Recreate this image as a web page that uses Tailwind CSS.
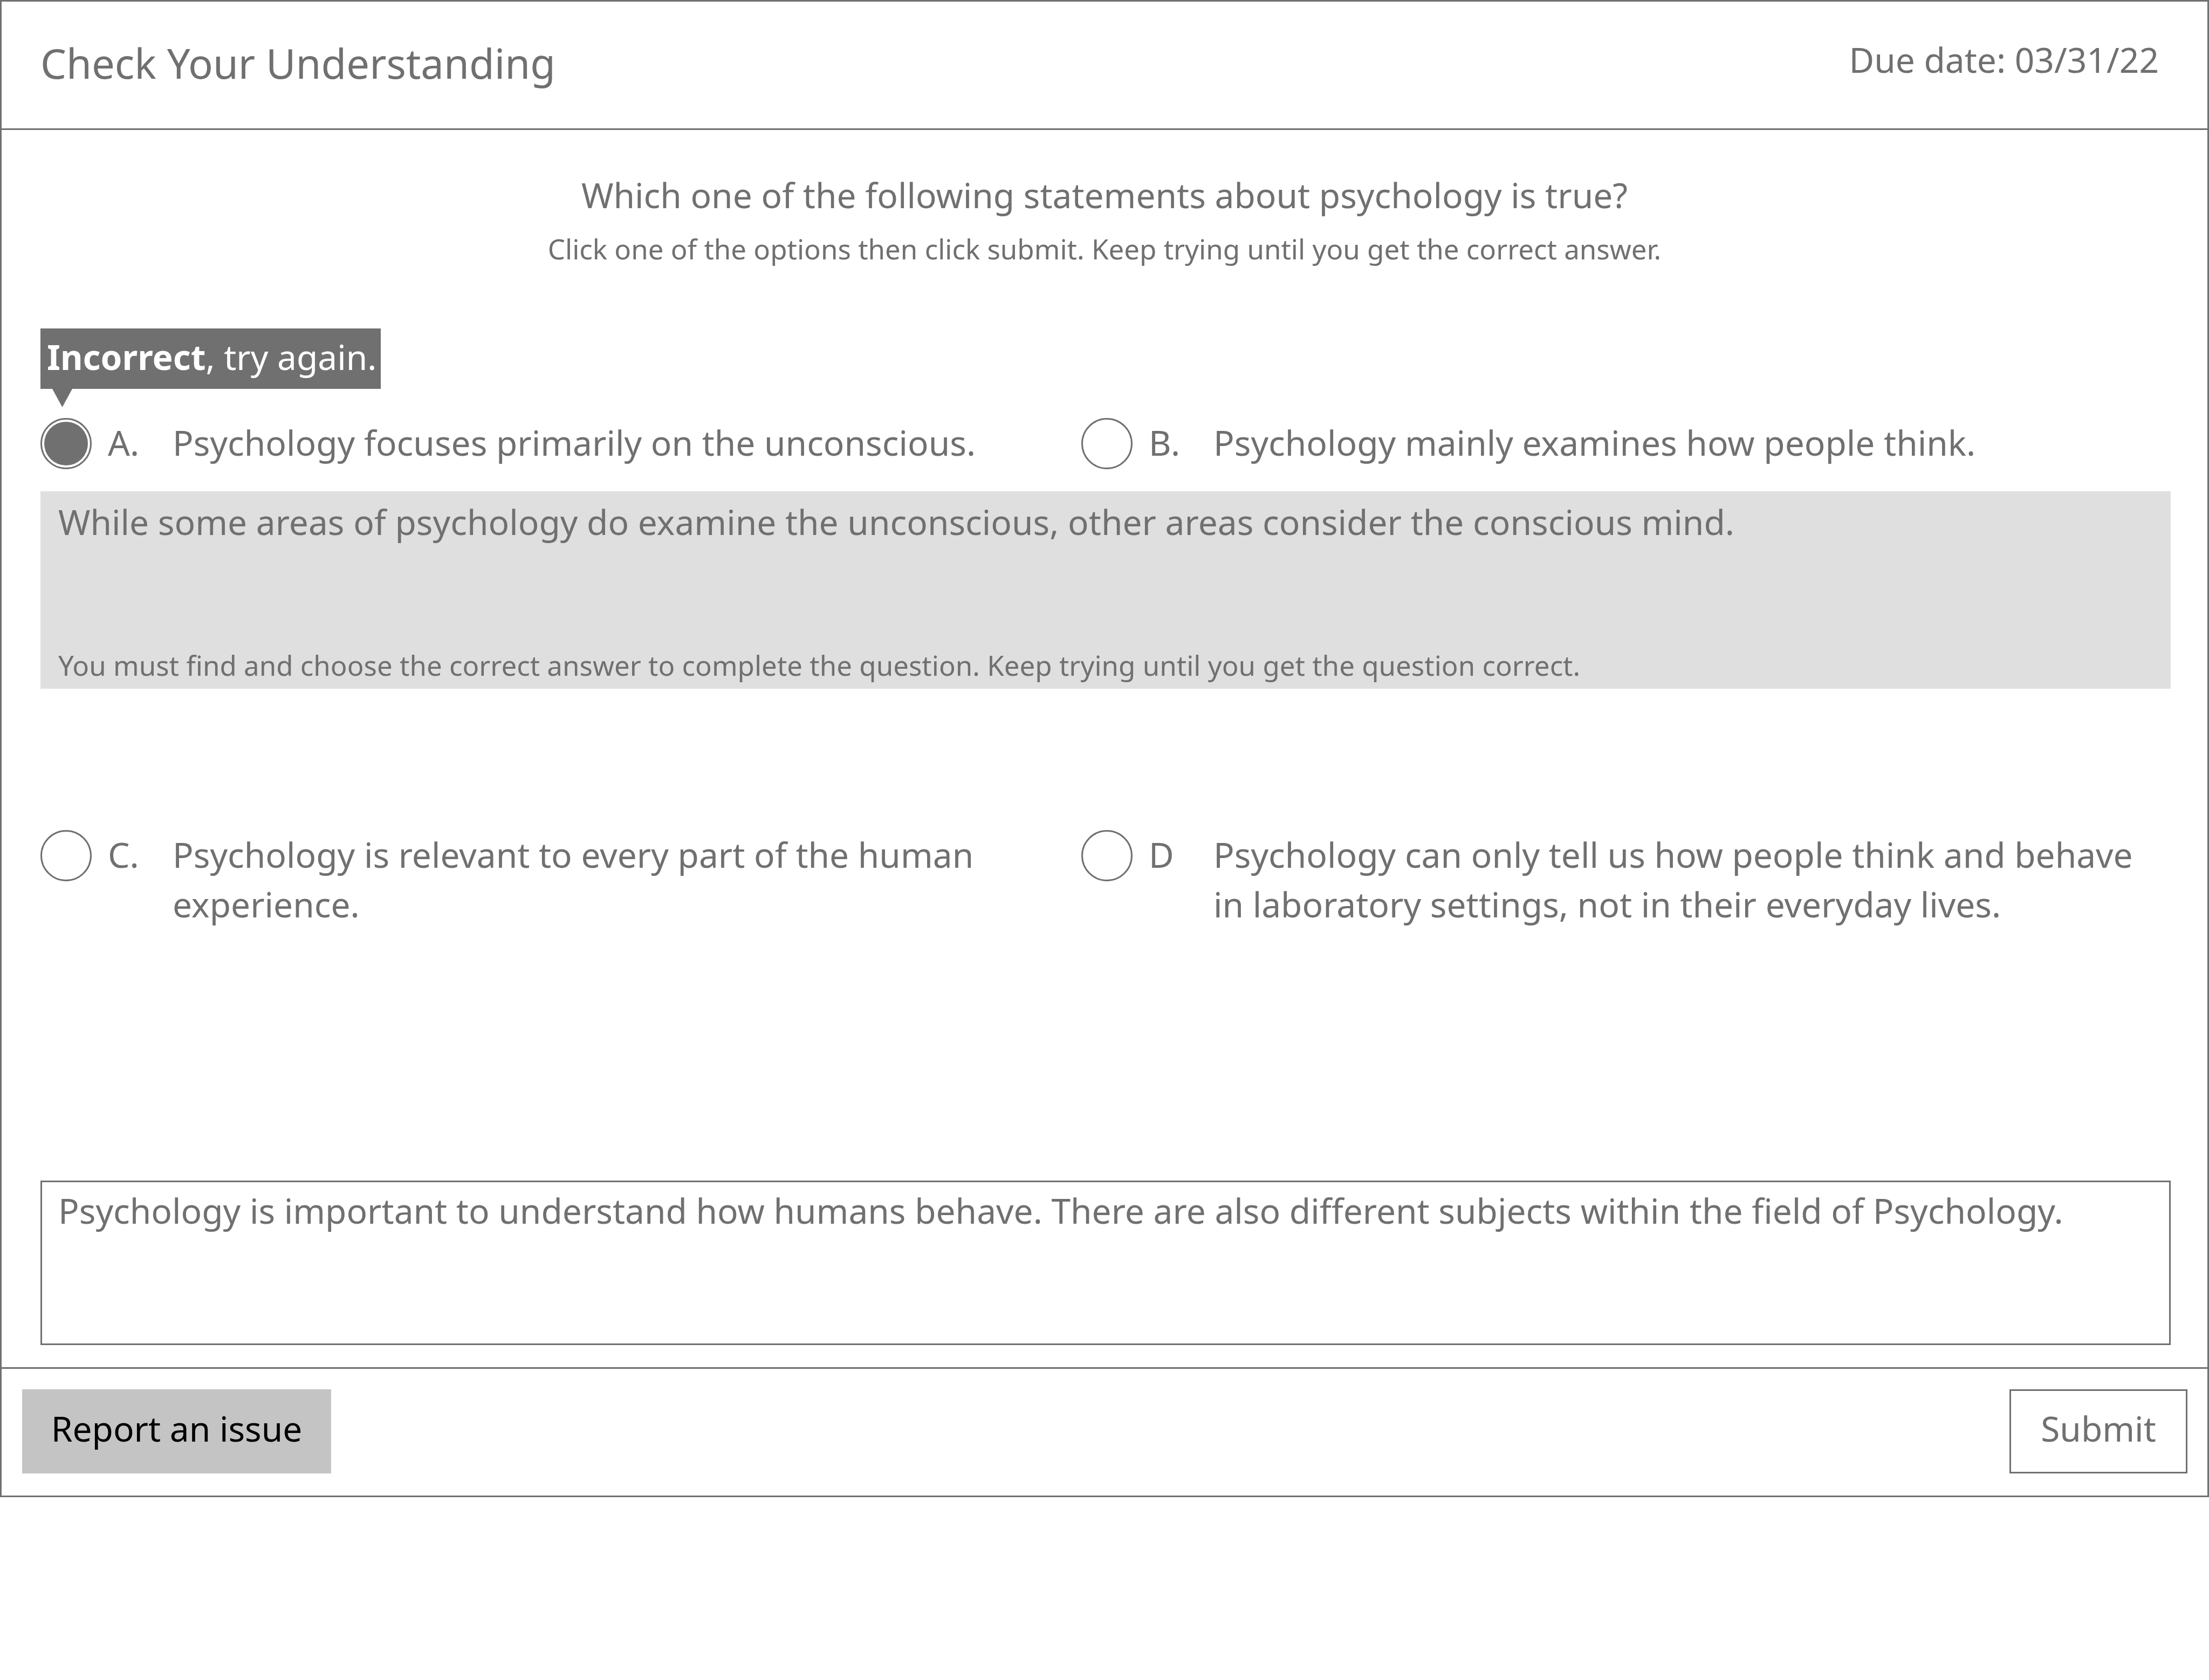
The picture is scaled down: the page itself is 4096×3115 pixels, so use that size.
<!DOCTYPE html>
<html lang="en">
<head>
<meta charset="utf-8">
<meta name="viewport" content="width=device-width, initial-scale=1">
<title>Check Your Understanding</title>
<script src="https://cdn.jsdelivr.net/npm/@tailwindcss/browser@4"></script>
</head>
<body class="bg-white font-['Noto_Sans','Open_Sans',sans-serif] text-[64px] leading-[92px] text-[#707070]">
<form class="border-3 border-[#707070]">
  <header class="flex items-start justify-between border-b-3 border-[#707070] pt-[63px] pr-[90px] pb-[70px] pl-[72px]">
    <h1 class="text-[76px] leading-[102px]">Check Your Understanding</h1>
    <p class="leading-[90px]">Due date: 03/31/22</p>
  </header>

  <main>
    <div class="pt-[75px] text-center">
      <h2 id="question">Which one of the following statements about psychology is true?</h2>
      <p class="mt-[17px] text-[51px] leading-[72px]">Click one of the options then click submit. Keep trying until you get the correct answer.</p>
    </div>

    <div class="pt-[112px] pr-[68px] pb-[41px] pl-[72px]">
      <div role="status" class="mb-5 w-fit">
        <p class="bg-[#707070] pt-px pr-2 pb-[7px] pl-3 leading-[104px] text-white"><strong class="font-bold">Incorrect</strong>, try again.</p>
        <svg class="ml-[22px] block h-[34px] w-[37px] fill-[#707070]" viewBox="0 0 37 34" aria-hidden="true"><path d="M0 0H37L18.5 34Z"/></svg>
      </div>

      <div role="radiogroup" aria-labelledby="question" class="grid grid-cols-[193fr_202fr] items-start">
        <label class="flex items-start gap-[30px]">
          <input type="radio" name="answer" value="a" checked class="size-[95px] shrink-0 appearance-none rounded-full border-3 border-[#707070] bg-clip-content p-[4px] checked:bg-[#707070]">
          <span class="flex"><span class="w-[120px] shrink-0">A.</span><span>Psychology focuses primarily on the unconscious.</span></span>
        </label>
        <label class="flex items-start gap-[30px]">
          <input type="radio" name="answer" value="b" class="size-[95px] shrink-0 appearance-none rounded-full border-3 border-[#707070] bg-clip-content p-[4px] checked:bg-[#707070]">
          <span class="flex"><span class="w-[120px] shrink-0">B.</span><span>Psychology mainly examines how people think.</span></span>
        </label>

        <div class="col-span-2 mt-[41px] mb-[262px] flex min-h-[366px] flex-col justify-between bg-[#dfdfdf] px-[33px] pt-[11px] pb-2">
          <p>While some areas of psychology do examine the unconscious, other areas consider the conscious mind.</p>
          <p class="text-[51px] leading-[72px]">You must find and choose the correct answer to complete the question. Keep trying until you get the question correct.</p>
        </div>

        <label class="flex items-start gap-[30px]">
          <input type="radio" name="answer" value="c" class="size-[95px] shrink-0 appearance-none rounded-full border-3 border-[#707070] bg-clip-content p-[4px] checked:bg-[#707070]">
          <span class="flex"><span class="w-[120px] shrink-0">C.</span><span>Psychology is relevant to every part of the human experience.</span></span>
        </label>
        <label class="flex items-start gap-[30px] pr-6">
          <input type="radio" name="answer" value="d" class="size-[95px] shrink-0 appearance-none rounded-full border-3 border-[#707070] bg-clip-content p-[4px] checked:bg-[#707070]">
          <span class="flex"><span class="w-[120px] shrink-0">D</span><span>Psychology can only tell us how people think and behave in laboratory settings, not in their everyday lives.</span></span>
        </label>
      </div>

      <textarea aria-label="Notes" class="mt-[466px] block h-[305px] w-full resize-none overflow-hidden border-3 border-[#707070] px-[30px] py-[7px]">Psychology is important to understand how humans behave. There are also different subjects within the field of Psychology.</textarea>
    </div>
  </main>

  <footer class="flex justify-between border-t-3 border-[#707070] pt-[38px] pr-[37px] pb-[41px] pl-[38px]">
    <button type="button" class="h-[156px] w-[573px] bg-[#c4c4c4] pb-[10px] text-black">Report an issue</button>
    <button type="submit" class="h-[156px] w-[330px] border-3 border-[#707070] pb-[10px]">Submit</button>
  </footer>
</form>
</body>
</html>
